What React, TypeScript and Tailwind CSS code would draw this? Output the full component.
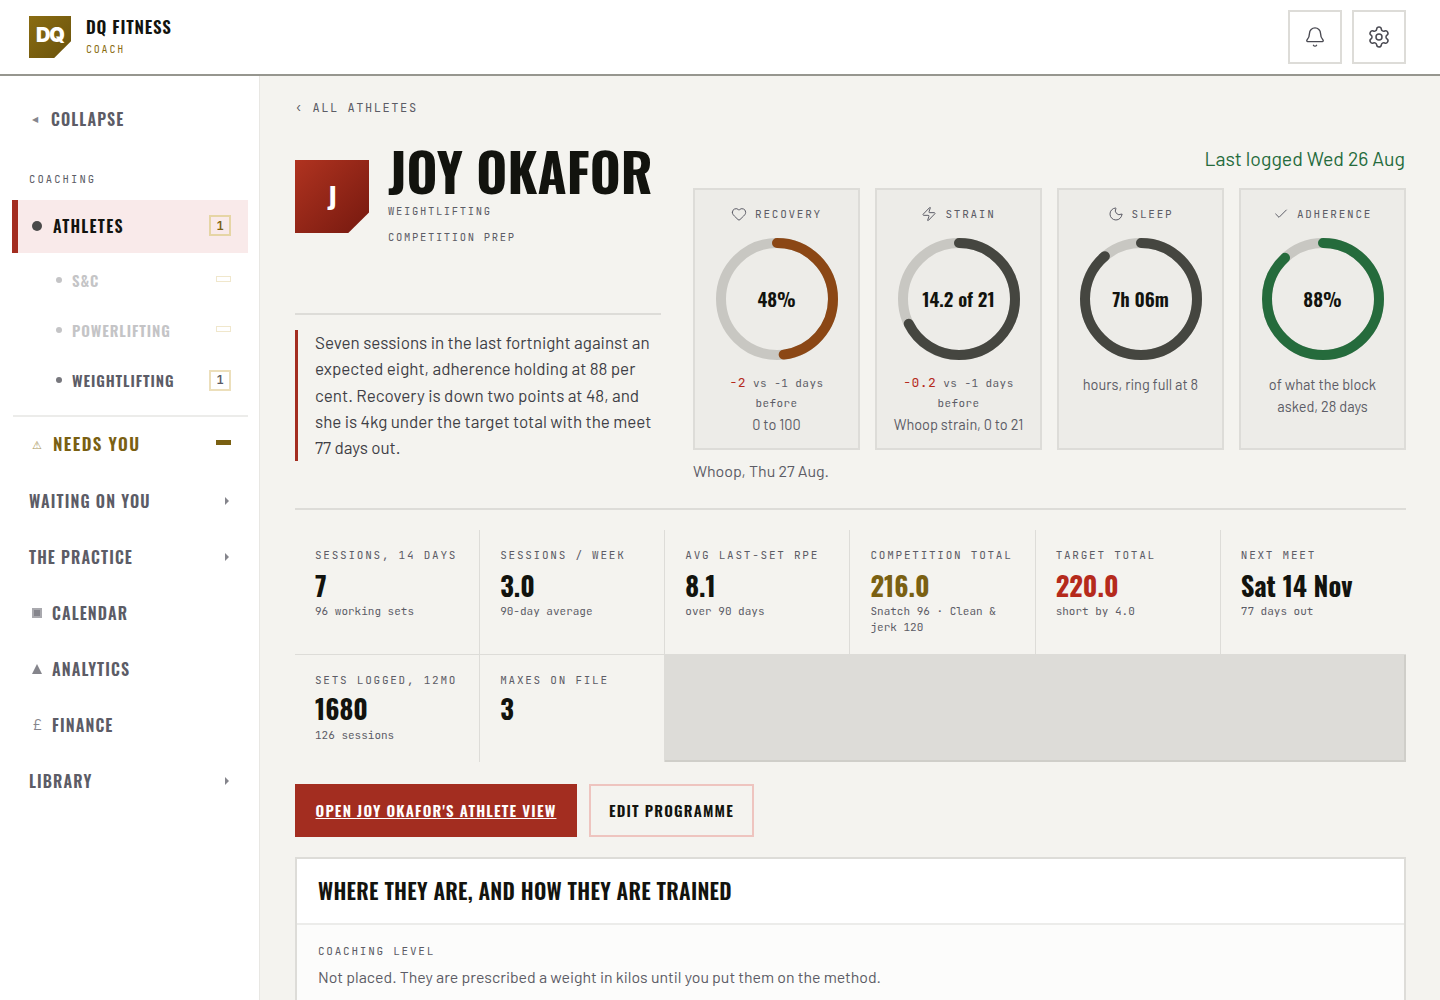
import React from "react";
import { Bell, Settings, Heart, Zap, Moon, Check } from "lucide-react";

const D = "font-['Oswald',sans-serif] font-semibold";
const DB = "font-['Oswald',sans-serif] font-bold";
const M = "font-['JetBrains_Mono',monospace]";
const B = "font-['Barlow',sans-serif]";

function Ring({ pct, color, label }: { pct: number; color: string; label: string }) {
  const r = 56;
  const c = 2 * Math.PI * r;
  return (
    <div className="relative w-[122px] h-[122px] mx-auto mt-[15px]">
      <svg width="122" height="122" viewBox="0 0 122 122" className="-rotate-90">
        <circle cx="61" cy="61" r={r} fill="none" stroke="#c8c7c2" strokeWidth="10" />
        <circle cx="61" cy="61" r={r} fill="none" stroke={color} strokeWidth="10" strokeLinecap="round" strokeDasharray={`${(c * pct) / 100} ${c}`} />
      </svg>
      <div className={`absolute inset-0 pb-[2px] flex items-center justify-center text-[19px] leading-none text-[#12130e] ${D}`}>{label}</div>
    </div>
  );
}

function Card({ icon, title, pct, color, label, delta, foot, wide }: { icon: React.ReactNode; title: string; pct: number; color: string; label: string; delta?: string; foot: string; wide?: boolean }) {
  return (
    <div className="h-[262px] border-2 border-[#dddcd8] bg-[#edece8] pt-[15px] px-[12px] text-center">
      <div className={`flex items-center justify-center gap-[8px] h-[18px] text-[11px] tracking-[0.16em] text-[#5c5c66] ${M}`}>
        {icon}
        <span>{title}</span>
      </div>
      <Ring pct={pct} color={color} label={label} />
      {delta !== undefined ? (
        <div className={`mt-[13px] text-[11px] leading-[20px] text-[#5c5c66] tracking-[0.04em] ${M}`}>
          <span className="text-[#b52a1c] text-[13px]">{delta}</span> vs -1 days before
        </div>
      ) : null}
      <div className={`${delta !== undefined ? "mt-0" : "mt-[13px]"} text-[14.5px] leading-[22px] text-[#5c5c66] ${B} ${wide ? "-mx-[6px]" : ""}`}>{foot}</div>
    </div>
  );
}

function Stat({ label, value, sub, color, second }: { label: string; value: string; sub?: string; color?: string; second?: boolean }) {
  return (
    <div className="px-[20px] pt-[18px] bg-[#f4f3ef]">
      <div className={`text-[11px] leading-[14px] tracking-[0.16em] text-[#5c5c66] whitespace-nowrap ${M}`}>{label}</div>
      <div className={`${second ? "mt-[2px]" : "mt-[4px]"} text-[26.5px] leading-[38px] whitespace-nowrap ${color ?? "text-[#12130e]"} ${DB}`}>{value}</div>
      {sub ? <div className={`${second ? "mt-0" : "-mt-[1px]"} text-[11px] leading-[16px] text-[#5c5c66] ${M}`}>{sub}</div> : null}
    </div>
  );
}

function Chevron() {
  return (
    <svg width="4" height="8" viewBox="0 0 4 8" className="shrink-0">
      <polygon points="0,0 4,4 0,8" fill="#85858c" />
    </svg>
  );
}

function NavRow({ glyph, label, chevron }: { glyph?: React.ReactNode; label: string; chevron?: boolean }) {
  return (
    <div className="flex items-center h-[56px] pl-[29px] pr-[19px] text-[#5c5c66]">
      {glyph ? <span className="w-[23px] flex items-center pl-[3px]">{glyph}</span> : null}
      <span className={`flex-1 text-[16px] tracking-[0.07em] ${D}`}>{label}</span>
      {chevron ? <Chevron /> : null}
    </div>
  );
}

function SubRow({ label, dim, count }: { label: string; dim?: boolean; count?: string }) {
  return (
    <div className={`flex items-center h-[50px] pb-[2px] pl-[56px] pr-[17px] ${dim ? "text-[#c4c4c6]" : "text-[#5c5c66]"}`}>
      <span className={`w-[6px] h-[6px] rounded-full mr-[10px] ${dim ? "bg-[#c4c4c6]" : "bg-[#77777d]"}`} />
      <span className={`flex-1 text-[15px] tracking-[0.06em] ${D}`}>{label}</span>
      {count ? (
        <span className={`w-[22px] h-[21px] border-2 border-[#ecdfbb] flex items-center justify-center text-[12px] font-bold ${M}`}>{count}</span>
      ) : (
        <span className="w-[15px] h-[6px] border border-[#f0e7cc] -mt-[3px]" />
      )}
    </div>
  );
}

export default function App() {
  return (
    <div className={`h-screen overflow-hidden bg-[#f4f3ef] flex flex-col ${B}`}>
      <header className="h-[76px] shrink-0 bg-white border-b-2 border-[#96968f] flex items-center justify-between pl-[29px] pr-[34px]">
        <div className="flex items-center gap-[15px]">
          <div className="w-[42px] h-[42px] bg-gradient-to-br from-[#8a6c12] to-[#6a530c] [clip-path:polygon(0_0,100%_0,100%_60%,60%_100%,0_100%)] flex items-center justify-center">
            <span className="text-[20px] leading-none text-white -mt-[5px] tracking-[-0.05em] font-['Inter',sans-serif] font-black">DQ</span>
          </div>
          <div className="mb-[4px]">
            <div className={`text-[17px] leading-[24px] tracking-[0.05em] text-[#12130e] ${D}`}>DQ FITNESS</div>
            <div className={`mt-[5px] text-[10px] leading-[12px] tracking-[0.18em] text-[#8a6c12] ${M}`}>COACH</div>
          </div>
        </div>
        <div className="flex gap-[10px]">
          <div className="w-[54px] h-[54px] border-2 border-[#dddcd8] flex items-center justify-center text-[#4a4a52]"><Bell size={22} strokeWidth={1.5} /></div>
          <div className="w-[54px] h-[54px] border-2 border-[#dddcd8] flex items-center justify-center text-[#4a4a52]"><Settings size={24} strokeWidth={1.5} /></div>
        </div>
      </header>
      <div className="flex flex-1 min-h-0">
        <aside className="w-[260px] shrink-0 bg-white border-r border-[#e8e7e3] pt-[25px] pr-[11px]">
          <div className="flex items-center h-[36px] pl-[32px] text-[#5c5c66]">
            <span className="w-[19px] text-[8px] text-[#85858c]">◀</span>
            <span className={`text-[16px] tracking-[0.07em] ${D}`}>COLLAPSE</span>
          </div>
          <div className={`mt-[35px] pl-[29px] text-[10.5px] leading-[14px] tracking-[0.2em] text-[#5c5c66] ${M}`}>COACHING</div>
          <div className="mt-[14px] ml-[12px] h-[53px] pb-[2px] bg-[#f9eaea] border-l-[6px] border-[#a32d20] flex items-center pl-[14px] pr-[17px] text-[#12130e]">
            <span className="w-[10px] h-[10px] rounded-full bg-[#4a4a4a] mr-[11px]" />
            <span className={`flex-1 text-[16px] tracking-[0.08em] ${D}`}>ATHLETES</span>
            <span className={`w-[22px] h-[21px] border-2 border-[#e6d5a5] flex items-center justify-center text-[12px] font-bold text-[#7a6012] ${M}`}>1</span>
          </div>
          <div className="mt-[3px]">
            <SubRow label="S&C" dim />
            <SubRow label="POWERLIFTING" dim />
            <SubRow label="WEIGHTLIFTING" count="1" />
          </div>
          <div className="mt-[9px] ml-[13px] border-t-2 border-[#ececea]" />
          <div className="flex items-center h-[56px] pb-[2px] pl-[32px] pr-[17px] text-[#7a6012]">
            <span className="w-[21px] text-[11px] leading-none text-[#a8945a]">⚠</span>
            <span className={`flex-1 text-[17px] tracking-[0.085em] ${D}`}>NEEDS YOU</span>
            <span className="w-[15px] h-[5px] bg-[#7a6012] -mt-[3px]" />
          </div>
          <NavRow label="WAITING ON YOU" chevron />
          <NavRow label="THE PRACTICE" chevron />
          <NavRow glyph={<span className="w-[10px] h-[10px] bg-[#a9a9ae] flex items-center justify-center"><span className="w-[6px] h-[6px] bg-[#85858c]" /></span>} label="CALENDAR" />
          <NavRow glyph={<svg width="10" height="10" viewBox="0 0 10 10"><polygon points="5,0 10,10 0,10" fill="#85858c" /></svg>} label="ANALYTICS" />
          <NavRow glyph={<span className="text-[16px] leading-none text-[#85858c] -mt-[3px]">£</span>} label="FINANCE" />
          <NavRow label="LIBRARY" chevron />
        </aside>
        <main className="flex-1 min-w-0 pl-[35px] pr-[34px] pt-[24px]">
          <div className={`text-[12px] leading-[16px] tracking-[0.13em] text-[#5c5c66] ${M}`}>‹ ALL ATHLETES</div>
          <div className="mt-[26px] flex gap-[32px] h-[366px]">
            <div className="w-[366px] shrink-0">
              <div className="flex gap-[19px] h-[173px] border-b-2 border-[#dddcd8]">
                <div className={`mt-[18px] w-[74px] h-[73px] shrink-0 bg-gradient-to-br from-[#b03320] to-[#76190f] [clip-path:polygon(0_0,100%_0,100%_72%,72%_100%,0_100%)] flex items-center justify-center text-white text-[28px] ${D}`}>J</div>
                <div>
                  <div className={`mt-[1px] text-[53px] leading-[54px] text-[#12130e] whitespace-nowrap ${DB}`}>JOY OKAFOR</div>
                  <div className={`mt-[1px] text-[10.5px] leading-[26px] tracking-[0.16em] text-[#5c5c66] ${M}`}>WEIGHTLIFTING<br />COMPETITION PREP</div>
                </div>
              </div>
              <div className="mt-[15px] flex flex-col border-l-[3px] border-[#a32d20] pl-[17px] text-[17px] leading-[26.25px] text-[#3f3f46]">
                <p className="-mt-[1px] pb-[1px]">Seven sessions in the last fortnight against an expected eight, adherence holding at 88 per cent. Recovery is down two points at 48, and she is 4kg under the target total with the meet 77 days out.</p>
              </div>
            </div>
            <div className="flex-1 min-w-0 pt-[3px]">
              <div className="text-right pr-[1px] text-[19.5px] leading-[26px] text-[#256b3c]">Last logged Wed 26 Aug</div>
              <div className="mt-[17px] grid grid-cols-[repeat(4,167px)] gap-[15px]">
                <Card icon={<Heart size={16} strokeWidth={1.5} />} title="RECOVERY" pct={48} color="#8b4715" label="48%" delta="-2" foot="0 to 100" />
                <Card icon={<Zap size={16} strokeWidth={1.5} />} title="STRAIN" pct={67.6} color="#454640" label="14.2 of 21" delta="-0.2" foot="Whoop strain, 0 to 21" wide />
                <Card icon={<Moon size={16} strokeWidth={1.5} />} title="SLEEP" pct={88.7} color="#454640" label="7h 06m" foot="hours, ring full at 8" />
                <Card icon={<Check size={16} strokeWidth={1.5} />} title="ADHERENCE" pct={88} color="#256b3c" label="88%" foot="of what the block asked, 28 days" />
              </div>
              <div className="mt-[9px] text-[16px] leading-[24px] text-[#5c5c66]">Whoop, Thu 27 Aug.</div>
            </div>
          </div>
          <div className="border-t-2 border-[#dddcd8] pt-[20px]">
            <div className="grid grid-cols-[repeat(5,184.17px)_1fr] grid-rows-[124px_107px] gap-[1px] bg-[#dddcd8]">
              <Stat label="SESSIONS, 14 DAYS" value="7" sub="96 working sets" />
              <Stat label="SESSIONS / WEEK" value="3.0" sub="90-day average" />
              <Stat label="AVG LAST-SET RPE" value="8.1" sub="over 90 days" />
              <Stat label="COMPETITION TOTAL" value="216.0" sub="Snatch 96 · Clean & jerk 120" color="text-[#7a6012]" />
              <Stat label="TARGET TOTAL" value="220.0" sub="short by 4.0" color="text-[#b52a1c]" />
              <Stat label="NEXT MEET" value="Sat 14 Nov" sub="77 days out" />
              <Stat label="SETS LOGGED, 12MO" value="1680" sub="126 sessions" second />
              <Stat label="MAXES ON FILE" value="3" second />
              <div className="col-span-4 bg-[#dddcd8] border-r-2 border-b-2 border-[#cfcec9]" />
            </div>
          </div>
          <div className="mt-[22px] flex gap-[12px]">
            <div className={`w-[282px] h-[53px] bg-[#a32d20] flex items-center justify-center text-white underline text-[15px] tracking-[0.08em] whitespace-nowrap ${D}`}>OPEN JOY OKAFOR'S ATHLETE VIEW</div>
            <div className={`w-[165px] h-[53px] border-2 border-[#eec4bf] flex items-center justify-center text-[#12130e] text-[15px] tracking-[0.08em] whitespace-nowrap ${D}`}>EDIT PROGRAMME</div>
          </div>
          <section className="mt-[20px] bg-white border-2 border-[#dddcd8]">
            <div className="h-[66px] pb-[2px] border-b-2 border-[#ececea] flex items-center px-[21px]">
              <h2 className={`text-[21.5px] tracking-[0.0125em] text-[#12130e] whitespace-nowrap ${D}`}>WHERE THEY ARE, AND HOW THEY ARE TRAINED</h2>
            </div>
            <div className="px-[21px] pt-[19px] pb-[40px] bg-[#fcfcfb]">
              <div className={`text-[11px] leading-[14px] tracking-[0.16em] text-[#5c5c66] ${M}`}>COACHING LEVEL</div>
              <div className="mt-[7px] text-[15.9px] leading-[24px] text-[#5c5c66]">Not placed. They are prescribed a weight in kilos until you put them on the method.</div>
            </div>
          </section>
        </main>
      </div>
    </div>
  );
}
